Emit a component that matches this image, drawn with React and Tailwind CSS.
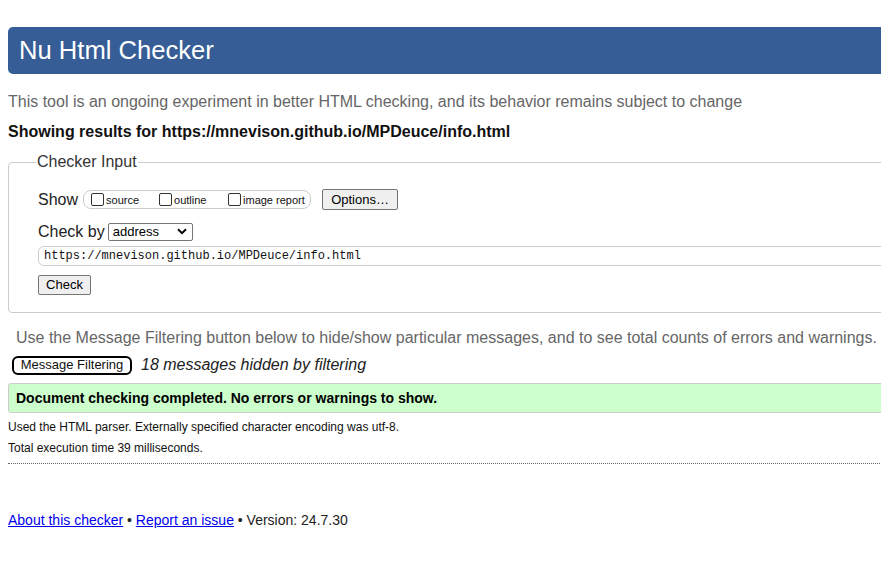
import React from "react";

function Box({ label }) {
  return (
    <span className="flex items-center">
      <span className="inline-block w-[13px] h-[13px] border border-[#333] rounded-[2px] bg-white mr-[2px]" />
      <span className="text-[11px] text-[#111] mt-[2px]">{label}</span>
    </span>
  );
}

export default function App() {
  return (
    <div className="w-full overflow-hidden bg-white min-h-[564px]" style={{ fontFamily: '"Liberation Sans", Arial, sans-serif' }}>
      <div className="w-[940px] pl-2 pt-[27px]">
        <div className="h-[47px] bg-[#365d95] rounded-l-[5px] flex items-center pl-[11px]">
          <h1 className="text-white text-[25.6px] leading-none">Nu Html Checker</h1>
        </div>
        <p className="mt-[19px] text-[16px] leading-[18px] text-[#666]">
          This tool is an ongoing experiment in better HTML checking, and its behavior remains subject to change
        </p>
        <p className="mt-[12px] text-[16px] leading-[18px] font-bold text-[#111]">
          Showing results for https://mnevison.github.io/MPDeuce/info.html
        </p>

        <fieldset className="mt-[12px] border border-[#ccc] rounded-[4px] pl-[29px] pr-2 pb-[17px] h-[160px]">
          <legend className="text-[16px] leading-[18px] text-[#333] px-[1px] ml-[-2px]">Checker Input</legend>
          <div className="flex items-center mt-[18px] h-[21px]">
            <span className="text-[16px] text-[#222]">Show</span>
            <div className="ml-[5px] flex items-center h-[19px] w-[228px] border border-[#ccc] rounded-[8px] pl-[7px]">
              <span className="w-[68px]"><Box label="source" /></span>
              <span className="w-[69px]"><Box label="outline" /></span>
              <Box label="image report" />
            </div>
            <span className="ml-[11px] h-[21px] w-[76px] flex items-center justify-center bg-[#efefef] border border-[#767676] rounded-[2px] text-[13px] text-black">
              Options…
            </span>
          </div>
          <div className="flex items-center mt-[12px] h-[19px]">
            <span className="text-[16px] text-[#222]">Check by</span>
            <span className="ml-[3px] h-[18px] w-[85px] flex items-center justify-between border border-[#767676] rounded-[2px] bg-white pl-[4px] pr-[5px] text-[13px] text-black">
              address
              <svg width="10" height="7" viewBox="0 0 10 7">
                <path d="M1 1.2 L5 5.2 L9 1.2" fill="none" stroke="#000" strokeWidth="2" />
              </svg>
            </span>
          </div>
          <div className="mt-[5px] h-[20px] border border-[#ccc] rounded-[6px] flex items-center pl-[5px]">
            <span className="text-[12px] text-[#111]" style={{ fontFamily: '"Liberation Mono", "Courier New", monospace' }}>
              https://mnevison.github.io/MPDeuce/info.html
            </span>
          </div>
          <div className="mt-[6px]">
            <span className="inline-flex h-[20px] w-[53px] items-center justify-center bg-[#efefef] border border-[#767676] rounded-[2px] text-[13px] text-black">
              Check
            </span>
          </div>
        </fieldset>

        <p className="mt-[16px] pl-2 text-[16px] leading-[18px] text-[#666]">
          Use the Message Filtering button below to hide/show particular messages, and to see total counts of errors and warnings.
        </p>
        <div className="flex items-center mt-[8px] h-[20px]">
          <span className="ml-[4px] h-[19px] w-[120px] flex items-center justify-center border-2 border-black rounded-[6px] text-[13px] text-[#111]">
            Message Filtering
          </span>
          <span className="ml-[9px] italic text-[16px] text-[#222]">18 messages hidden by filtering</span>
        </div>
        <div className="mt-[8px] h-[30px] bg-[#ccffcc] border border-[#ccc] rounded-l-[3px] flex items-center pl-[7px]">
          <span className="text-[14px] font-bold text-black">Document checking completed. No errors or warnings to show.</span>
        </div>
        <p className="mt-[7px] text-[12px] leading-[14px] text-[#111]">Used the HTML parser. Externally specified character encoding was utf-8.</p>
        <p className="mt-[7px] text-[12px] leading-[14px] text-[#111]">Total execution time 39 milliseconds.</p>
        <div className="mt-[8px] w-[872px] border-t border-dotted border-[#666]" />
        <p className="mt-[48px] text-[14px] leading-[16px] text-[#222]">
          <a href="#" className="text-[#0000ee] underline">About this checker</a>
          {" • "}
          <a href="#" className="text-[#0000ee] underline">Report an issue</a>
          {" • Version: 24.7.30"}
        </p>
      </div>
    </div>
  );
}
